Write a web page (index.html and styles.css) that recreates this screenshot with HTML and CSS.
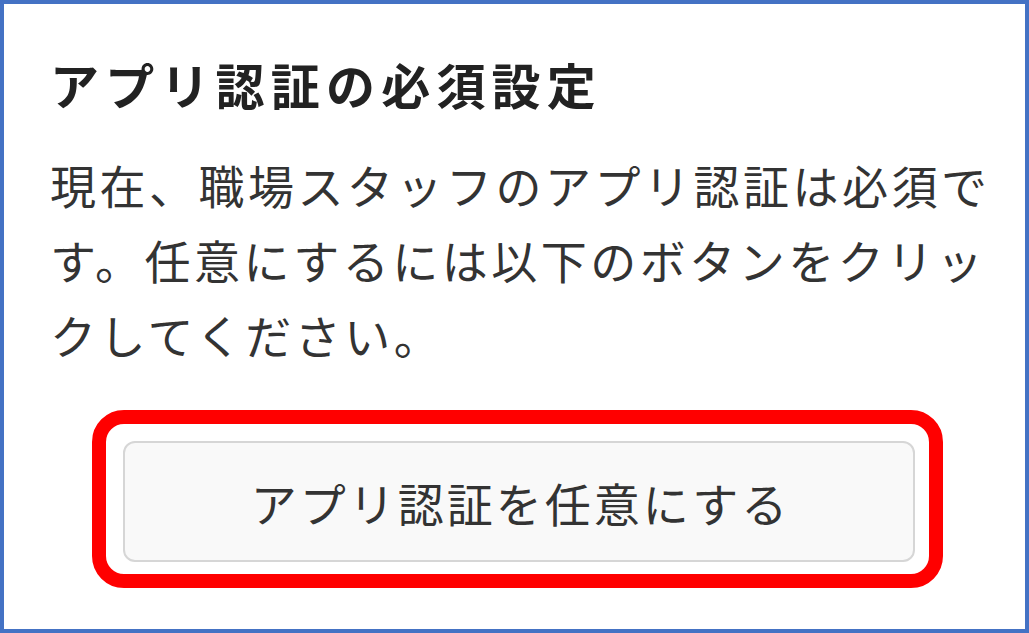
FILE: index.html
```html
<!DOCTYPE html>
<html lang="ja">
<head>
<meta charset="utf-8">
<link rel="stylesheet" href="styles.css">
</head>
<body>
<div class="frame">
  <h1 class="title">アプリ認証の必須設定</h1>
  <p class="desc">現在、職場スタッフのアプリ認証は必須です。任意にするには以下のボタンをクリックしてください。</p>
  <div class="highlight">
    <button class="btn" type="button">アプリ認証を任意にする</button>
  </div>
</div>
</body>
</html>
```
FILE: styles.css
```css
html, body {
  margin: 0;
  padding: 0;
  background: #ffffff;
}
.frame {
  box-sizing: border-box;
  width: 1029px;
  height: 633px;
  border: 4px solid #4472c4;
  background: #ffffff;
  padding: 0 0 0 46px;
  font-family: "Noto Sans CJK JP", "Noto Sans", sans-serif;
  overflow: hidden;
}
.title {
  margin: 45px 0 0 0;
  font-size: 49px;
  line-height: 70px;
  letter-spacing: 6.2px;
  font-weight: 700;
  color: #222222;
}
.desc {
  margin: 28px 0 0 0;
  width: 960px;
  font-size: 46px;
  line-height: 75px;
  letter-spacing: 3.5px;
  color: #333333;
}
.highlight {
  box-sizing: border-box;
  margin: 38px 0 0 42px;
  width: 851px;
  height: 178px;
  border: 14px solid #ff0000;
  border-radius: 32px;
  padding: 17px 14px 12px 17px;
}
.btn {
  box-sizing: border-box;
  display: flex;
  align-items: center;
  justify-content: center;
  width: 792px;
  height: 121px;
  border: 2px solid #d6d6d6;
  border-radius: 12px;
  background: #f9f9f9;
  font-family: "Noto Sans CJK JP", "Noto Sans", sans-serif;
  font-size: 46px;
  letter-spacing: 3px;
  color: #333333;
  padding: 0 0 0 3px;
}
```
